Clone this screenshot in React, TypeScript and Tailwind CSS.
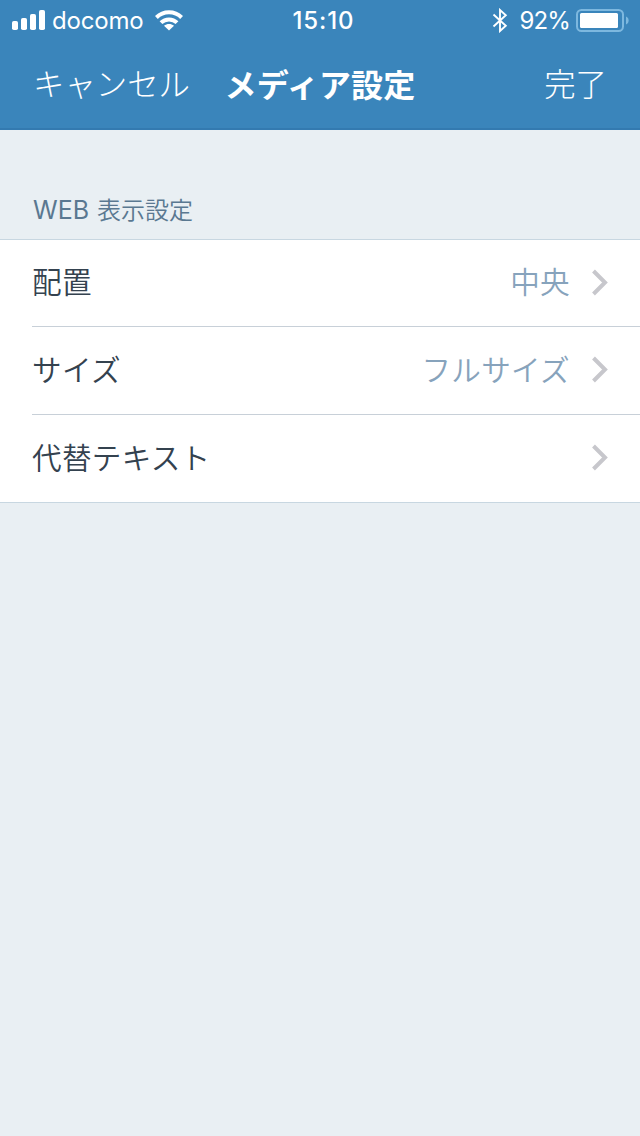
interface SettingRowProps {
  label: string;
  value?: string;
  last?: boolean;
  height: string;
}

function SignalIcon() {
  return (
    <svg width="34" height="22" viewBox="0 0 34 22" fill="currentColor" className="mb-0.5 shrink-0">
      <rect x="0" y="12" width="6" height="9" rx="1.8" />
      <rect x="9" y="9" width="6" height="12" rx="1.8" />
      <rect x="18" y="5" width="6" height="16" rx="1.8" />
      <rect x="27" y="1" width="6" height="20" rx="1.8" />
    </svg>
  );
}

function WifiIcon() {
  return (
    <svg width="28" height="21" viewBox="0 0 28 21" fill="none" stroke="currentColor" strokeWidth="4" className="mb-0.5 shrink-0">
      <path d="M1.4 7.5 C8.4 .5 19.6 .5 26.6 7.5" />
      <path d="M6 12.6 C10.4 8.3 17.6 8.3 22 12.6" />
      <path d="M14 20.4 L9 15.8 C12 13.4 16 13.4 19 15.8 Z" fill="currentColor" stroke="none" />
    </svg>
  );
}

function BluetoothIcon() {
  return (
    <svg width="16" height="25" viewBox="0 0 16 25" fill="none" stroke="currentColor" strokeWidth="1.9" className="mb-0.5 shrink-0">
      <path d="M1.5 6.5 L13.8 17.8 L8 23 V2 L13.8 7.2 L1.5 18.5" />
    </svg>
  );
}

function BatteryIcon() {
  return (
    <svg width="53" height="24" viewBox="0 0 53 24" className="shrink-0">
      <rect x="1" y="1" width="46" height="21" rx="4.5" fill="none" stroke="#7db8df" strokeWidth="2" />
      <rect x="4" y="4" width="38" height="15" rx="1.5" fill="white" />
      <path d="M50 7.5 C53.5 8.8 53.5 14.2 50 15.5 Z" fill="#7db8df" />
    </svg>
  );
}

function StatusBar() {
  return (
    <div className="grid h-[42px] grid-cols-[1fr_auto_1fr] items-center text-2xl leading-10">
      <div className="flex items-center pl-3">
        <SignalIcon />
        <span className="ml-1.5 tracking-[-0.2px]">docomo</span>
        <span className="ml-3">
          <WifiIcon />
        </span>
      </div>
      <div className="pl-[7px] font-medium tracking-[0.9px]">15:10</div>
      <div className="flex items-center justify-end pr-[11px]">
        <BluetoothIcon />
        <span className="mr-1.5 ml-3 tracking-[-0.9px]">92%</span>
        <BatteryIcon />
      </div>
    </div>
  );
}

function SettingRow({ label, value, last, height }: SettingRowProps) {
  return (
    <div className={`ml-8 flex items-center pr-[31px] pb-px text-[29.6px] font-[350] ${height} ${last ? '' : 'border-b border-[#c8d0d8]'}`}>
      <span className="flex-1 tracking-[0.3px] text-[#34424f]">{label}</span>
      {value && <span className="mr-[21px] tracking-[0.3px] text-[#87a3bc]">{value}</span>}
      <svg width="18" height="28" viewBox="0 0 18 28" fill="none" stroke="#c7c7cc" strokeWidth="4" className="shrink-0">
        <path d="M2.5 2 L14 13.5 L2.5 25" />
      </svg>
    </div>
  );
}

export default function App() {
  return (
    <div className="min-h-[1136px] w-full bg-[#e9eff3] font-['Inter','Noto_Sans_CJK_JP',sans-serif]">
      <header className="h-[130px] border-b-2 border-[#337ab0] bg-[#3a85bb] text-white">
        <StatusBar />
        <nav className="grid h-[88px] grid-cols-[1fr_auto_1fr] items-center px-[33px] text-[31.4px]">
          <button className="text-left font-light">キャンセル</button>
          <h1 className="text-[32px] font-bold tracking-[0.2px]">メディア設定</h1>
          <button className="text-right font-light">完了</button>
        </nav>
      </header>
      <h2 className="flex h-[109px] items-end pb-3 pl-[33px] text-2xl font-[350] text-[#5a7891]">
        <span className="mr-2 font-[Inter] text-[25px] font-normal">WEB</span>
        <span className="leading-8">表示設定</span>
      </h2>
      <section className="border-y border-[#c8d7e1] bg-white">
        <SettingRow label="配置" value="中央" height="h-[87px]" />
        <SettingRow label="サイズ" value="フルサイズ" height="h-[88px]" />
        <SettingRow label="代替テキスト" height="h-[87px]" last />
      </section>
    </div>
  );
}
